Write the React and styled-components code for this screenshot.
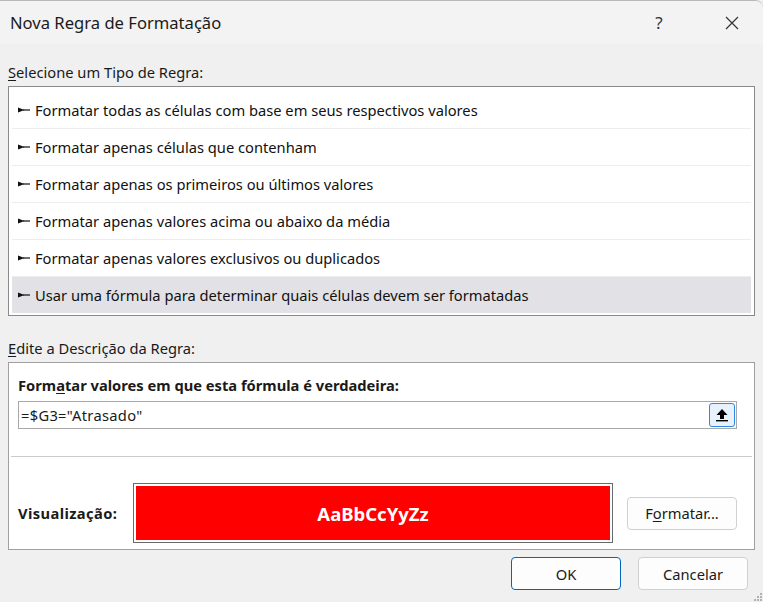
import styled, { createGlobalStyle } from "styled-components";

const GlobalStyle = createGlobalStyle`
  html, body {
    margin: 0;
    padding: 0;
    background: #f0f0f0;
  }
  body {
    font-family: "Noto Sans", "Open Sans", sans-serif;
    color: #1a1a1a;
  }
`;

const Window = styled.div`
  width: 763px;
  height: 602px;
  box-sizing: border-box;
  background: #f0f0f0;
  border-top: 1px solid #b8b8b8;
  border-top-right-radius: 8px;
  display: flex;
  flex-direction: column;
  position: relative;
  overflow: hidden;
`;

const TitleBar = styled.div`
  height: 43px;
  background: #f3f3f3;
  display: flex;
  align-items: center;
  padding-left: 10px;
`;

const Title = styled.div`
  flex: 1;
  font-size: 16.6px;
  color: #1b1b1b;
`;

const TitleButton = styled.div`
  width: 46px;
  display: flex;
  justify-content: center;
  align-items: center;
  font-size: 17px;
  color: #333;
  margin-right: ${(p) => p.$mr || 0}px;
`;

const Body = styled.div`
  padding: 0 8px;
  display: flex;
  flex-direction: column;
`;

const SectionLabel = styled.div`
  font-size: 14.7px;
  height: 20px;
  line-height: 20px;
  margin-top: ${(p) => p.$mt}px;
  margin-bottom: 4px;
  u {
    text-decoration: underline;
    text-underline-offset: 2px;
  }
`;

const ListBox = styled.div`
  background: #fff;
  border: 1px solid #8a8a8a;
  padding: 4px 3px 2px;
  display: flex;
  flex-direction: column;
`;

const RuleRow = styled.div`
  height: 37px;
  display: flex;
  align-items: center;
  gap: 5px;
  padding-left: 6px;
  font-size: 14.7px;
  color: #111;
  background: ${(p) => (p.$selected ? "#e1e1e6" : "#fff")};
  border-top: ${(p) => (p.$first ? "none" : "1px solid #ededed")};
  box-sizing: border-box;
`;

const DescPanel = styled.div`
  background: #fff;
  border: 1px solid #a0a0a0;
  height: 188px;
  box-sizing: border-box;
  display: flex;
  flex-direction: column;
  padding: 0 9px 0 9px;
`;

const BoldLabel = styled.div`
  font-size: 14.7px;
  font-weight: 700;
  margin-top: 12px;
  height: 20px;
  line-height: 20px;
  u {
    text-underline-offset: 2px;
  }
`;

const FormulaBox = styled.div`
  margin-top: 6px;
  margin-right: 8px;
  height: 28px;
  border: 1px solid #a8a8a8;
  box-sizing: border-box;
  display: flex;
  align-items: center;
  padding-left: 2px;
  font-size: 14.7px;
  letter-spacing: 0.3px;
`;

const FormulaText = styled.span`
  flex: 1;
`;

const CollapseButton = styled.div`
  width: 26px;
  height: 24px;
  box-sizing: border-box;
  border: 1px solid #2e8ae0;
  border-radius: 3px;
  background: #e8f2fc;
  display: flex;
  align-items: center;
  justify-content: center;
  margin-right: 1px;
`;

const Divider = styled.div`
  height: 1px;
  background: #cbcbcb;
  margin: 27px -7px 0 -7px;
`;

const PreviewRow = styled.div`
  display: flex;
  align-items: center;
  margin-top: 26px;
`;

const PreviewLabel = styled.div`
  width: 115px;
  font-size: 14.7px;
  font-weight: 700;
  letter-spacing: 0.4px;
`;

const PreviewFrame = styled.div`
  width: 480px;
  height: 60px;
  box-sizing: border-box;
  border: 1px solid #6a6a6a;
  padding: 2px;
  background: #fff;
`;

const PreviewFill = styled.div`
  height: 100%;
  background: #ff0000;
  color: #fff;
  font-weight: 700;
  font-size: 18.5px;
  display: flex;
  align-items: center;
  justify-content: center;
`;

const Button = styled.div`
  width: 110px;
  height: 33px;
  box-sizing: border-box;
  border: 1px solid ${(p) => (p.$primary ? "#0067c0" : "#d0d0d0")};
  border-radius: 4px;
  background: #fdfdfd;
  display: flex;
  align-items: center;
  justify-content: center;
  font-size: 14.7px;
  color: #1a1a1a;
  u {
    text-underline-offset: 2px;
  }
`;

const FormatButton = styled(Button)`
  margin-left: 14px;
`;

const Footer = styled.div`
  display: flex;
  justify-content: flex-end;
  gap: 17px;
  padding-right: 7px;
  margin-top: 7px;
`;

const Grip = styled.svg`
  position: absolute;
  right: 0;
  bottom: 0;
`;

function Bullet() {
  return (
    <svg width="12" height="8" viewBox="0 0 12 8">
      <polygon points="0,1.6 6.5,4 0,6.4" fill="#111" />
      <rect x="5" y="3.4" width="7" height="1.2" fill="#111" />
    </svg>
  );
}

const rules = [
  "Formatar todas as células com base em seus respectivos valores",
  "Formatar apenas células que contenham",
  "Formatar apenas os primeiros ou últimos valores",
  "Formatar apenas valores acima ou abaixo da média",
  "Formatar apenas valores exclusivos ou duplicados",
  "Usar uma fórmula para determinar quais células devem ser formatadas",
];

export default function App() {
  return (
    <>
      <GlobalStyle />
      <Window>
        <TitleBar>
          <Title>Nova Regra de Formatação</Title>
          <TitleButton $mr={27}>?</TitleButton>
          <TitleButton $mr={8}>
            <svg width="14" height="14" viewBox="0 0 14 14">
              <path d="M1 1 L13 13 M13 1 L1 13" stroke="#333" strokeWidth="1.2" />
            </svg>
          </TitleButton>
        </TitleBar>
        <Body>
          <SectionLabel $mt={18}>
            <u>S</u>elecione um Tipo de Regra:
          </SectionLabel>
          <ListBox>
            {rules.map((r, i) => (
              <RuleRow key={r} $first={i === 0} $selected={i === rules.length - 1}>
                <Bullet />
                {r}
              </RuleRow>
            ))}
          </ListBox>
          <SectionLabel $mt={22}>
            <u>E</u>dite a Descrição da Regra:
          </SectionLabel>
          <DescPanel>
            <BoldLabel>
              Form<u>a</u>tar valores em que esta fórmula é verdadeira:
            </BoldLabel>
            <FormulaBox>
              <FormulaText>=$G3="Atrasado"</FormulaText>
              <CollapseButton>
                <svg width="14" height="14" viewBox="0 0 14 14">
                  <polygon points="7,1 12.5,7 9,7 9,11 5,11 5,7 1.5,7" fill="#000" />
                  <rect x="1" y="12" width="12" height="1.4" fill="#000" />
                </svg>
              </CollapseButton>
            </FormulaBox>
            <Divider />
            <PreviewRow>
              <PreviewLabel>Visualização:</PreviewLabel>
              <PreviewFrame>
                <PreviewFill>AaBbCcYyZz</PreviewFill>
              </PreviewFrame>
              <FormatButton>
                F<u>o</u>rmatar...
              </FormatButton>
            </PreviewRow>
          </DescPanel>
          <Footer>
            <Button $primary>OK</Button>
            <Button>Cancelar</Button>
          </Footer>
        </Body>
        <Grip width="12" height="12" viewBox="0 0 12 12">
          {[
            [9, 3],
            [9, 6],
            [6, 6],
            [9, 9],
            [6, 9],
            [3, 9],
          ].map(([x, y]) => (
            <rect key={`${x}-${y}`} x={x} y={y} width="2" height="2" fill="#b0b0b0" />
          ))}
        </Grip>
      </Window>
    </>
  );
}
